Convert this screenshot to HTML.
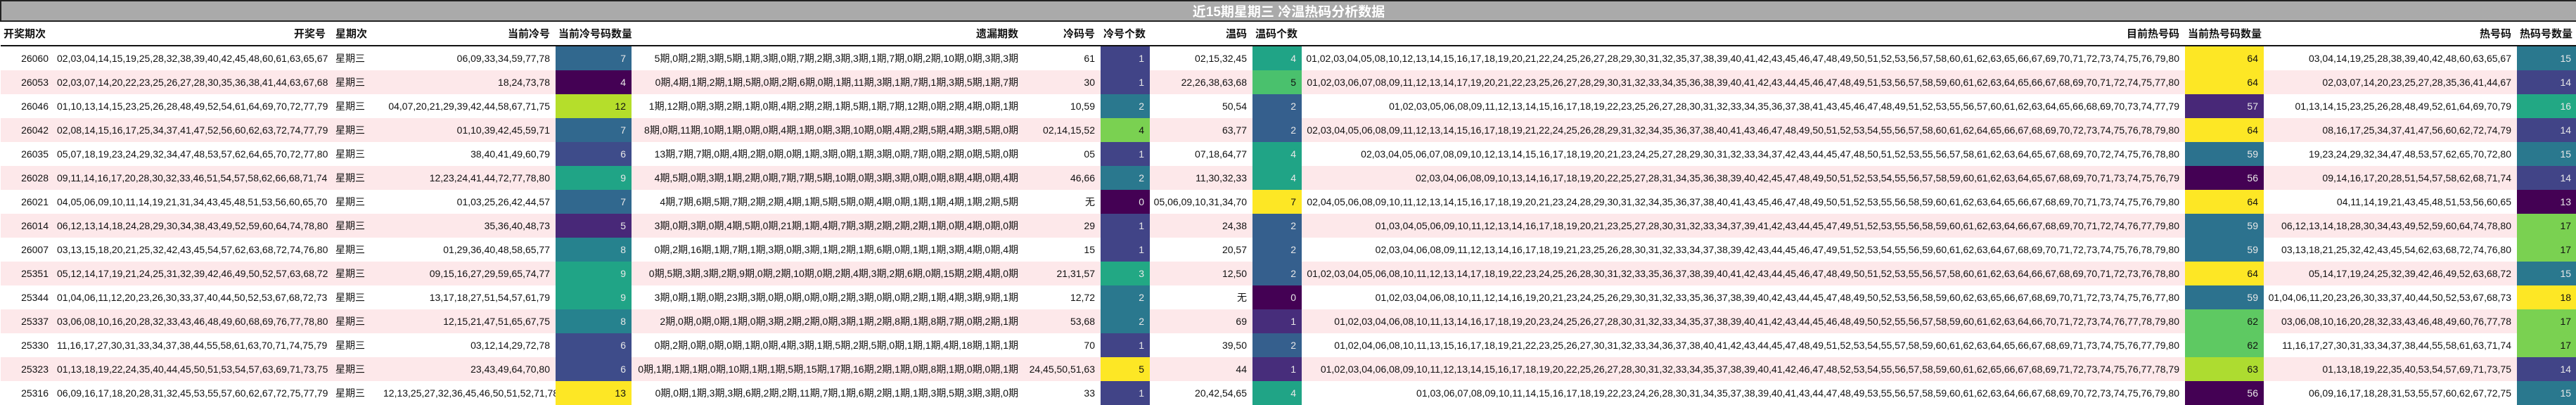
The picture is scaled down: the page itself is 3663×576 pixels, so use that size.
<!DOCTYPE html>
<html><head><meta charset="utf-8">
<style>
html,body{margin:0;padding:0;background:#fff;}
body{width:3663px;height:576px;overflow:hidden;font-family:"Liberation Sans","Noto Sans CJK SC",sans-serif;font-size:14px;color:#111;}
table{border-collapse:collapse;table-layout:fixed;width:3663px;}
td,th{padding:0 8px 0 4px;white-space:nowrap;overflow:hidden;text-align:right;vertical-align:middle;}
.title td{height:26px;background:#aaaaaa;border:2px solid #222;color:#fff;font-weight:bold;font-size:19px;text-align:center;padding:0;}
.hd th{height:33px;font-weight:bold;font-size:15px;border-bottom:2px solid #111;}
tr.r td{height:34px;}
tr.p td{background:#fde8ea;}
td.l,th.l{text-align:left;padding-left:6px;}
.w{color:#e8e8e8;}
.k{color:#111;}
</style></head><body>
<table>
<colgroup>
<col style="width:76px"><col style="width:394px"><col style="width:70px"><col style="width:249px"><col style="width:108px"><col style="width:558px"><col style="width:109px"><col style="width:70px"><col style="width:146px"><col style="width:70px"><col style="width:1256px"><col style="width:112px"><col style="width:360px"><col style="width:85px">
</colgroup>
<tr class="title"><td colspan="14">近15期星期三 冷温热码分析数据</td></tr>
<tr class="hd"><th class="l" style="padding-left:4px">开奖期次</th><th>开奖号</th><th class="l">星期次</th><th>当前冷号</th><th>当前冷号码数量</th><th>遗漏期数</th><th>冷码号</th><th>冷号个数</th><th>温码</th><th>温码个数</th><th>目前热号码</th><th>当前热号码数量</th><th>热号码</th><th>热码号数量</th></tr>

<tr class="r"><td>26060</td><td>02,03,04,14,15,19,25,28,32,38,39,40,42,45,48,60,61,63,65,67</td><td class="l">星期三</td><td>06,09,33,34,59,77,78</td><td class="w" style="background:#31688e">7</td><td>5期,0期,2期,3期,5期,1期,3期,0期,7期,2期,3期,3期,1期,7期,0期,2期,10期,0期,3期,3期</td><td>61</td><td class="w" style="background:#414487">1</td><td>02,15,32,45</td><td class="w" style="background:#20a486">4</td><td>01,02,03,04,05,08,10,12,13,14,15,16,17,18,19,20,21,22,24,25,26,27,28,29,30,31,32,35,37,38,39,40,41,42,43,45,46,47,48,49,50,51,52,53,56,57,58,60,61,62,63,65,66,67,69,70,71,72,73,74,75,76,79,80</td><td class="k" style="background:#fde725">64</td><td>03,04,14,19,25,28,38,39,40,42,48,60,63,65,67</td><td class="w" style="background:#2a788e">15</td></tr>

<tr class="r p"><td>26053</td><td>02,03,07,14,20,22,23,25,26,27,28,30,35,36,38,41,44,63,67,68</td><td class="l">星期三</td><td>18,24,73,78</td><td class="w" style="background:#440154">4</td><td>0期,4期,1期,2期,1期,5期,0期,2期,6期,0期,1期,11期,3期,1期,7期,1期,3期,5期,1期,7期</td><td>30</td><td class="w" style="background:#414487">1</td><td>22,26,38,63,68</td><td class="k" style="background:#4ac16d">5</td><td>01,02,03,06,07,08,09,11,12,13,14,17,19,20,21,22,23,25,26,27,28,29,30,31,32,33,34,35,36,38,39,40,41,42,43,44,45,46,47,48,49,51,53,56,57,58,59,60,61,62,63,64,65,66,67,68,69,70,71,72,74,75,77,80</td><td class="k" style="background:#fde725">64</td><td>02,03,07,14,20,23,25,27,28,35,36,41,44,67</td><td class="w" style="background:#414487">14</td></tr>

<tr class="r"><td>26046</td><td>01,10,13,14,15,23,25,26,28,48,49,52,54,61,64,69,70,72,77,79</td><td class="l">星期三</td><td>04,07,20,21,29,39,42,44,58,67,71,75</td><td class="k" style="background:#b5de2b">12</td><td>1期,12期,0期,3期,2期,1期,0期,4期,2期,2期,1期,5期,1期,7期,12期,0期,2期,4期,0期,1期</td><td>10,59</td><td class="w" style="background:#2a788e">2</td><td>50,54</td><td class="w" style="background:#355f8d">2</td><td>01,02,03,05,06,08,09,11,12,13,14,15,16,17,18,19,22,23,25,26,27,28,30,31,32,33,34,35,36,37,38,41,43,45,46,47,48,49,51,52,53,55,56,57,60,61,62,63,64,65,66,68,69,70,73,74,77,79</td><td class="w" style="background:#482878">57</td><td>01,13,14,15,23,25,26,28,48,49,52,61,64,69,70,79</td><td class="w" style="background:#22a884">16</td></tr>

<tr class="r p"><td>26042</td><td>02,08,14,15,16,17,25,34,37,41,47,52,56,60,62,63,72,74,77,79</td><td class="l">星期三</td><td>01,10,39,42,45,59,71</td><td class="w" style="background:#31688e">7</td><td>8期,0期,11期,10期,1期,0期,0期,4期,1期,0期,3期,10期,0期,4期,2期,5期,4期,3期,5期,0期</td><td>02,14,15,52</td><td class="k" style="background:#7ad151">4</td><td>63,77</td><td class="w" style="background:#355f8d">2</td><td>02,03,04,05,06,08,09,11,12,13,14,15,16,17,18,19,21,22,24,25,26,28,29,31,32,34,35,36,37,38,40,41,43,46,47,48,49,50,51,52,53,54,55,56,57,58,60,61,62,64,65,66,67,68,69,70,72,73,74,75,76,78,79,80</td><td class="k" style="background:#fde725">64</td><td>08,16,17,25,34,37,41,47,56,60,62,72,74,79</td><td class="w" style="background:#414487">14</td></tr>

<tr class="r"><td>26035</td><td>05,07,18,19,23,24,29,32,34,47,48,53,57,62,64,65,70,72,77,80</td><td class="l">星期三</td><td>38,40,41,49,60,79</td><td class="w" style="background:#3e4c8a">6</td><td>13期,7期,7期,0期,4期,2期,0期,0期,1期,3期,0期,1期,3期,0期,7期,0期,2期,0期,5期,0期</td><td>05</td><td class="w" style="background:#414487">1</td><td>07,18,64,77</td><td class="w" style="background:#20a486">4</td><td>02,03,04,05,06,07,08,09,10,12,13,14,15,16,17,18,19,20,21,23,24,25,27,28,29,30,31,32,33,34,37,42,43,44,45,47,48,50,51,52,53,55,56,57,58,61,62,63,64,65,67,68,69,70,72,74,75,76,78,80</td><td class="w" style="background:#2c728e">59</td><td>19,23,24,29,32,34,47,48,53,57,62,65,70,72,80</td><td class="w" style="background:#2a788e">15</td></tr>

<tr class="r p"><td>26028</td><td>09,11,14,16,17,20,28,30,32,33,46,51,54,57,58,62,66,68,71,74</td><td class="l">星期三</td><td>12,23,24,41,44,72,77,78,80</td><td class="w" style="background:#20a486">9</td><td>4期,5期,0期,3期,1期,2期,0期,7期,7期,5期,10期,0期,3期,3期,0期,0期,8期,4期,0期,4期</td><td>46,66</td><td class="w" style="background:#2a788e">2</td><td>11,30,32,33</td><td class="w" style="background:#20a486">4</td><td>02,03,04,06,08,09,10,13,14,16,17,18,19,20,22,25,27,28,31,34,35,36,38,39,40,42,45,47,48,49,50,51,52,53,54,55,56,57,58,59,60,61,62,63,64,65,67,68,69,70,71,73,74,75,76,79</td><td class="w" style="background:#440154">56</td><td>09,14,16,17,20,28,51,54,57,58,62,68,71,74</td><td class="w" style="background:#414487">14</td></tr>

<tr class="r"><td>26021</td><td>04,05,06,09,10,11,14,19,21,31,34,43,45,48,51,53,56,60,65,70</td><td class="l">星期三</td><td>01,03,25,26,42,44,57</td><td class="w" style="background:#31688e">7</td><td>4期,7期,6期,5期,7期,2期,2期,4期,1期,5期,5期,0期,4期,0期,1期,1期,4期,1期,2期,5期</td><td>无</td><td class="w" style="background:#440154">0</td><td>05,06,09,10,31,34,70</td><td class="k" style="background:#fde725">7</td><td>02,04,05,06,08,09,10,11,12,13,14,15,16,17,18,19,20,21,23,24,28,29,30,31,32,34,35,36,37,38,40,41,43,45,46,47,48,49,50,51,52,53,55,56,58,59,60,61,62,63,64,65,66,67,68,69,70,71,73,74,75,76,79,80</td><td class="k" style="background:#fde725">64</td><td>04,11,14,19,21,43,45,48,51,53,56,60,65</td><td class="w" style="background:#440154">13</td></tr>

<tr class="r p"><td>26014</td><td>06,12,13,14,18,24,28,29,30,34,38,43,49,52,59,60,64,74,78,80</td><td class="l">星期三</td><td>35,36,40,48,73</td><td class="w" style="background:#482878">5</td><td>3期,0期,3期,0期,4期,5期,0期,21期,1期,4期,7期,3期,2期,2期,2期,1期,0期,4期,0期,0期</td><td>29</td><td class="w" style="background:#414487">1</td><td>24,38</td><td class="w" style="background:#355f8d">2</td><td>01,03,04,05,06,09,10,11,12,13,14,16,17,18,19,20,21,23,25,27,28,30,31,32,33,34,37,39,41,42,43,44,45,47,49,51,52,53,55,56,58,59,60,61,62,63,64,66,67,68,69,70,71,72,74,76,77,79,80</td><td class="w" style="background:#2c728e">59</td><td>06,12,13,14,18,28,30,34,43,49,52,59,60,64,74,78,80</td><td class="k" style="background:#7ad151">17</td></tr>

<tr class="r"><td>26007</td><td>03,13,15,18,20,21,25,32,42,43,45,54,57,62,63,68,72,74,76,80</td><td class="l">星期三</td><td>01,29,36,40,48,58,65,77</td><td class="w" style="background:#26828e">8</td><td>0期,2期,16期,1期,7期,1期,3期,0期,3期,1期,2期,1期,6期,0期,1期,1期,3期,4期,0期,4期</td><td>15</td><td class="w" style="background:#414487">1</td><td>20,57</td><td class="w" style="background:#355f8d">2</td><td>02,03,04,06,08,09,11,12,13,14,16,17,18,19,21,23,25,26,28,30,31,32,33,34,37,38,39,42,43,44,45,46,47,49,51,52,53,54,55,56,59,60,61,62,63,64,67,68,69,70,71,72,73,74,75,76,78,79,80</td><td class="w" style="background:#2c728e">59</td><td>03,13,18,21,25,32,42,43,45,54,62,63,68,72,74,76,80</td><td class="k" style="background:#7ad151">17</td></tr>

<tr class="r p"><td>25351</td><td>05,12,14,17,19,21,24,25,31,32,39,42,46,49,50,52,57,63,68,72</td><td class="l">星期三</td><td>09,15,16,27,29,59,65,74,77</td><td class="w" style="background:#20a486">9</td><td>0期,5期,3期,3期,2期,9期,0期,2期,10期,0期,2期,4期,3期,2期,6期,0期,15期,2期,4期,0期</td><td>21,31,57</td><td class="w" style="background:#22a884">3</td><td>12,50</td><td class="w" style="background:#355f8d">2</td><td>01,02,03,04,05,06,08,10,11,12,13,14,17,18,19,22,23,24,25,26,28,30,31,32,33,35,36,37,38,39,40,41,42,43,44,45,46,47,48,49,50,51,52,53,55,56,57,58,60,61,62,63,64,66,67,68,69,70,71,72,73,76,78,80</td><td class="k" style="background:#fde725">64</td><td>05,14,17,19,24,25,32,39,42,46,49,52,63,68,72</td><td class="w" style="background:#2a788e">15</td></tr>

<tr class="r"><td>25344</td><td>01,04,06,11,12,20,23,26,30,33,37,40,44,50,52,53,67,68,72,73</td><td class="l">星期三</td><td>13,17,18,27,51,54,57,61,79</td><td class="w" style="background:#20a486">9</td><td>3期,0期,1期,0期,23期,3期,0期,0期,0期,0期,2期,3期,0期,0期,2期,1期,4期,3期,9期,1期</td><td>12,72</td><td class="w" style="background:#2a788e">2</td><td>无</td><td class="w" style="background:#440154">0</td><td>01,02,03,04,06,08,10,11,12,14,16,19,20,21,23,24,25,26,29,30,31,32,33,35,36,37,38,39,40,42,43,44,45,47,48,49,50,52,53,56,58,59,60,62,63,65,66,67,68,69,70,71,72,73,74,75,76,77,80</td><td class="w" style="background:#2c728e">59</td><td>01,04,06,11,20,23,26,30,33,37,40,44,50,52,53,67,68,73</td><td class="k" style="background:#fde725">18</td></tr>

<tr class="r p"><td>25337</td><td>03,06,08,10,16,20,28,32,33,43,46,48,49,60,68,69,76,77,78,80</td><td class="l">星期三</td><td>12,15,21,47,51,65,67,75</td><td class="w" style="background:#26828e">8</td><td>2期,0期,0期,0期,1期,0期,3期,2期,2期,0期,3期,1期,2期,8期,1期,8期,7期,0期,2期,1期</td><td>53,68</td><td class="w" style="background:#2a788e">2</td><td>69</td><td class="w" style="background:#472d7b">1</td><td>01,02,03,04,06,08,10,11,13,14,16,17,18,19,20,23,24,25,26,27,28,30,31,32,33,34,35,37,38,39,40,41,42,43,44,45,46,48,49,50,52,55,56,57,58,59,60,61,62,63,64,66,70,71,72,73,74,76,77,78,79,80</td><td class="k" style="background:#5ec962">62</td><td>03,06,08,10,16,20,28,32,33,43,46,48,49,60,76,77,78</td><td class="k" style="background:#7ad151">17</td></tr>

<tr class="r"><td>25330</td><td>11,16,17,27,30,31,33,34,37,38,44,55,58,61,63,70,71,74,75,79</td><td class="l">星期三</td><td>03,12,14,29,72,78</td><td class="w" style="background:#3e4c8a">6</td><td>0期,2期,0期,0期,0期,1期,0期,4期,3期,1期,5期,2期,5期,0期,1期,1期,4期,18期,1期,1期</td><td>70</td><td class="w" style="background:#414487">1</td><td>39,50</td><td class="w" style="background:#355f8d">2</td><td>01,02,04,06,08,10,11,13,15,16,17,18,19,21,22,23,25,26,27,30,31,32,33,34,36,37,38,40,41,42,43,44,45,47,48,49,51,52,53,54,55,57,58,59,60,61,62,63,64,65,66,67,68,69,71,73,74,75,76,77,79,80</td><td class="k" style="background:#5ec962">62</td><td>11,16,17,27,30,31,33,34,37,38,44,55,58,61,63,71,74</td><td class="k" style="background:#7ad151">17</td></tr>

<tr class="r p"><td>25323</td><td>01,13,18,19,22,24,35,40,44,45,50,51,53,54,57,63,69,71,73,75</td><td class="l">星期三</td><td>23,43,49,64,70,80</td><td class="w" style="background:#3e4c8a">6</td><td>0期,1期,1期,1期,0期,10期,1期,1期,5期,15期,17期,16期,2期,1期,0期,8期,1期,0期,0期,1期</td><td>24,45,50,51,63</td><td class="k" style="background:#fde725">5</td><td>44</td><td class="w" style="background:#472d7b">1</td><td>01,02,03,04,06,08,09,10,11,12,13,14,15,16,17,18,19,20,22,25,26,27,28,30,31,32,33,34,35,37,38,39,40,41,42,46,47,48,52,53,54,55,56,57,58,59,60,61,62,65,66,67,68,69,71,72,73,74,75,76,77,78,79</td><td class="k" style="background:#addc30">63</td><td>01,13,18,19,22,35,40,53,54,57,69,71,73,75</td><td class="w" style="background:#414487">14</td></tr>

<tr class="r"><td>25316</td><td>06,09,16,17,18,20,28,31,32,45,53,55,57,60,62,67,72,75,77,79</td><td class="l">星期三</td><td>12,13,25,27,32,36,45,46,50,51,52,71,78</td><td class="k" style="background:#fde725">13</td><td>0期,0期,1期,3期,3期,6期,2期,2期,11期,7期,1期,6期,2期,1期,1期,3期,5期,3期,3期,0期</td><td>33</td><td class="w" style="background:#414487">1</td><td>20,42,54,65</td><td class="w" style="background:#20a486">4</td><td>01,03,06,07,08,09,10,11,14,15,16,17,18,19,22,23,24,26,28,30,31,34,35,37,38,39,40,41,43,44,47,48,49,53,55,56,57,58,59,60,61,62,63,64,66,67,68,69,70,72,73,74,75,76,79,80</td><td class="w" style="background:#440154">56</td><td>06,09,16,17,18,28,31,53,55,57,60,62,67,72,75</td><td class="w" style="background:#2a788e">15</td></tr>
</table>
</body></html>
